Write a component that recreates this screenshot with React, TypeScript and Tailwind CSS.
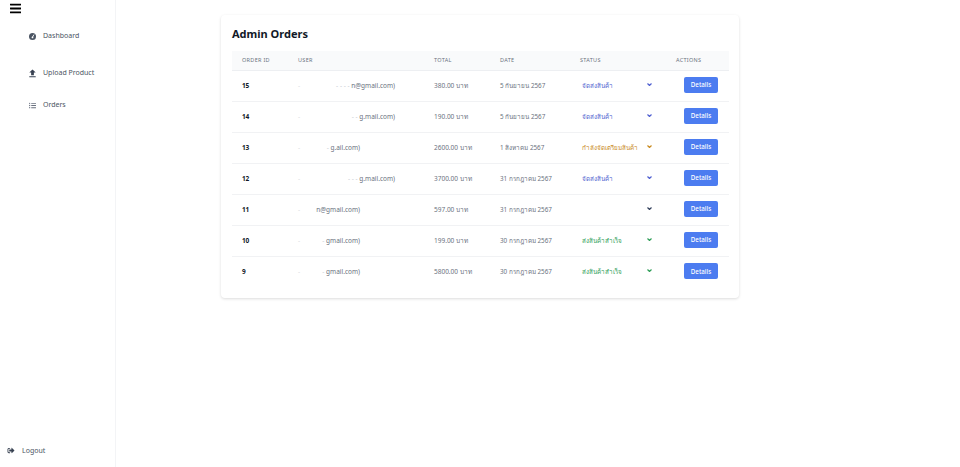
import React from 'react';
import { FaBars, FaListUl, FaSignOutAlt } from 'react-icons/fa';
import { MdFileUpload } from 'react-icons/md';

type Status = { label: string; color: string };

const SHIPPED: Status = { label: 'จัดส่งสินค้า', color: 'text-[#4f5fd0]' };
const PREPARING: Status = { label: 'กำลังจัดเตรียมสินค้า', color: 'text-[#c98a1e]' };
const DONE: Status = { label: 'ส่งสินค้าสำเร็จ', color: 'text-[#2f9e58]' };
const NONE: Status = { label: '', color: 'text-[#33415c]' };

const ORDERS = [
    { id: 15, mail: 'n@gmail.com)', mark: '- - - - ', end: 'w-[97px]', total: '380.00 บาท', date: '5 กันยายน 2567', status: SHIPPED },
    { id: 14, mail: 'g.mail.com)', mark: '- - ', end: 'w-[97px]', total: '190.00 บาท', date: '5 กันยายน 2567', status: SHIPPED },
    { id: 13, mail: 'g.ail.com)', mark: '- ', end: 'w-[62px]', total: '2600.00 บาท', date: '1 สิงหาคม 2567', status: PREPARING },
    { id: 12, mail: 'g.mail.com)', mark: '- - - ', end: 'w-[97px]', total: '3700.00 บาท', date: '31 กรกฎาคม 2567', status: SHIPPED },
    { id: 11, mail: 'n@gmail.com)', mark: '', end: 'w-[62px]', total: '597.00 บาท', date: '31 กรกฎาคม 2567', status: NONE },
    { id: 10, mail: 'gmail.com)', mark: '- ', end: 'w-[62px]', total: '199.00 บาท', date: '30 กรกฎาคม 2567', status: DONE },
    { id: 9, mail: 'gmail.com)', mark: '- ', end: 'w-[62px]', total: '5800.00 บาท', date: '30 กรกฎาคม 2567', status: DONE },
];

function GaugeIcon({ className }: { className?: string }) {
    return (
        <svg viewBox="0 0 16 16" className={className}>
            <circle cx="8" cy="8" r="8" fill="currentColor" />
            <path d="M8 9.5L11.5 3.5" stroke="#fff" strokeWidth="2" />
            <circle cx="8" cy="10" r="2" fill="#fff" />
        </svg>
    );
}

const NAV = [
    { label: 'Dashboard', icon: GaugeIcon, cls: 'mt-[11px]', iconCls: 'h-[7px] w-[7px] text-[#4b5563]' },
    { label: 'Upload Product', icon: MdFileUpload, cls: 'mt-[17px]', iconCls: 'h-[11px] w-[11px] -mx-[2px] text-[#374151]' },
    { label: 'Orders', icon: FaListUl, cls: 'mt-[12px]', iconCls: 'h-[7px] w-[7px] text-[#6b7280]' },
];

function Chevron() {
    return (
        <svg viewBox="0 0 10 6" className="mb-[2px] h-[3px] w-[5px]" fill="none" stroke="currentColor" strokeWidth="2.4">
            <path d="M1 1l4 4 4-4" />
        </svg>
    );
}

export default function App() {
    return (
        <div className="flex h-[467px] w-[960px] overflow-hidden bg-white font-['Noto_Sans','Open_Sans',sans-serif]">
            <aside className="flex w-[116px] shrink-0 flex-col border-r border-[#f3f4f6]">
                <div className="h-[15px] pl-[10px] pt-[2px] text-black">
                    <FaBars className="h-[13px] w-[11px]" />
                </div>
                <nav className="flex flex-col pl-[29px]">
                    {NAV.map(({ label, icon: Icon, cls, iconCls }) => (
                        <div key={label} className={`flex h-[20px] items-center gap-[7px] text-[7px] text-[#4b5563] ${cls}`}>
                            <Icon className={iconCls} />
                            <span>{label}</span>
                        </div>
                    ))}
                </nav>
                <div className="mt-auto mb-[11px] flex items-center gap-[7px] pl-[7px] text-[7px] text-[#4b5563]">
                    <FaSignOutAlt className="h-[7px] w-[8px] text-[#374151]" />
                    <span>Logout</span>
                </div>
            </aside>

            <main className="flex-1 pl-[105px] pt-[15px]">
                <div className="h-[283px] w-[518px] rounded-[4px] bg-white px-[11px] shadow-[0_1px_3px_rgba(0,0,0,0.14)]">
                    <h1 className="h-[36px] pt-[9px] text-[11px] font-bold leading-[20px] text-[#111827]">Admin Orders</h1>
                    <table className="w-[497px] table-fixed border-collapse text-left">
                        <colgroup>
                            <col className="w-[56px]" />
                            <col className="w-[136px]" />
                            <col className="w-[66px]" />
                            <col className="w-[80px]" />
                            <col className="w-[96px]" />
                            <col className="w-[63px]" />
                        </colgroup>
                        <thead>
                            <tr className="h-[19px] border-b border-[#edeff2] bg-[#f9fafb] text-[5.5px] tracking-[0.3px] text-[#6b7280]">
                                <th className="pl-[10px] font-normal">ORDER ID</th>
                                <th className="pl-[10px] font-normal">USER</th>
                                <th className="pl-[10px] font-normal">TOTAL</th>
                                <th className="pl-[10px] font-normal">DATE</th>
                                <th className="pl-[10px] font-normal">STATUS</th>
                                <th className="pl-[10px] font-normal">ACTIONS</th>
                            </tr>
                        </thead>
                        <tbody>
                            {ORDERS.map((o) => (
                                <tr key={o.id} className="h-[31px] border-b border-[#f1f2f4] text-[6.5px] text-[#6b7280] last:border-b-0">
                                    <td className="pl-[10px] font-bold tracking-[-0.3px] text-[#111827]">{o.id}</td>
                                    <td className="pl-[10px]">
                                        <div className={`${o.end} flex justify-between whitespace-nowrap`}>
                                            <span className="text-[#d9dce1]">-</span>
                                            <span>
                                                <span className="text-[#c9cdd3]">{o.mark}</span>{o.mail}
                                            </span>
                                        </div>
                                    </td>
                                    <td className="pl-[10px]">{o.total}</td>
                                    <td className="pl-[10px] text-[6.3px]">{o.date}</td>
                                    <td className="pl-[12px]">
                                        <div className={`flex w-[70px] items-center justify-between text-[6.3px] ${o.status.color}`}>
                                            <span>{o.status.label}</span>
                                            <Chevron />
                                        </div>
                                    </td>
                                    <td className="pl-[18px]">
                                        <button className="mt-[-1px] block h-[16px] w-[34px] rounded-[2px] bg-[#4c7cf0] text-[6.2px] font-medium text-white">Details</button>
                                    </td>
                                </tr>
                            ))}
                        </tbody>
                    </table>
                </div>
            </main>
        </div>
    );
}
